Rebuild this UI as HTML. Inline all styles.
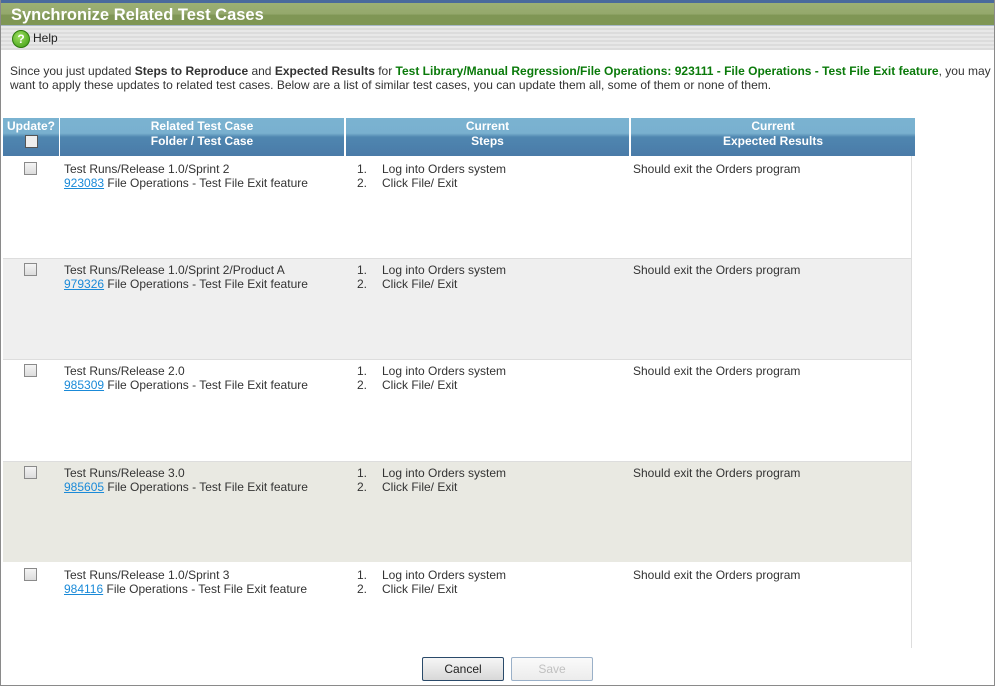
<!DOCTYPE html>
<html><head><meta charset="utf-8"><style>
*{margin:0;padding:0;box-sizing:border-box}
body{width:995px;height:686px;overflow:hidden;background:#fff;font-family:"Liberation Sans",sans-serif;font-size:12px;color:#333;position:relative}
.frame{position:absolute;left:0;top:0;width:995px;height:686px;border:1px solid #8a8a8a;border-top:none}
.topline{position:absolute;left:0;top:0;width:995px;height:3px;background:#4a6a9c}
.title{position:absolute;left:1px;top:3px;width:993px;height:23px;background:linear-gradient(#9cb074 0,#94a86c 50%,#7f9655 55%,#7f9655 100%);color:#fff;font-weight:bold;font-size:16.5px;padding:3px 0 0 10px;border-bottom:1px solid #a8b8c8}
.tool{position:absolute;left:1px;top:26px;width:993px;height:24px;background:repeating-linear-gradient(#e8e8e8 0,#e8e8e8 2px,#dcdcdc 2px,#dcdcdc 4px)}
.help{position:absolute;left:12px;top:30px;font-size:12px;color:#222}
.icon{display:inline-block;width:18px;height:18px;border-radius:50%;background:radial-gradient(circle at 40% 35%,#9fe060,#3a9a10);border:1px solid #2d7a0c;color:#fff;font-weight:bold;font-size:12px;text-align:center;line-height:16px;vertical-align:middle;margin-right:3px}
.intro{position:absolute;left:10px;top:64px;white-space:nowrap;line-height:14px;color:#333}
.g{color:#0a7a0a;font-weight:bold}
.th{position:absolute;top:118px;height:38px;background:linear-gradient(#7ab3d1 0,#79b0cf 40%,#4f86b0 50%,#4a7ba8 100%);color:#fff;font-weight:bold;text-align:center;line-height:15px;padding-top:1px}
.row{position:absolute;left:3px;width:908px;height:102px}
.cb{position:absolute;left:21px;top:6px;width:13px;height:13px;border:1px solid #8a8a8a;background:linear-gradient(#f4f4f4,#dcdcdc)}
.c1{position:absolute;left:61px;top:6px;line-height:14px}
.c2{position:absolute;left:354px;top:6px;line-height:14px}
.c2 span{display:inline-block;width:25px}
.c3{position:absolute;left:630px;top:6px}
.row.b .cb,.row.b .c1,.row.b .c2,.row.b .c3{top:4px}
a{color:#1a8ad8;text-decoration:underline}
.btn{position:absolute;top:657px;height:24px;width:82px;text-align:center;line-height:22px;font-size:12px}
</style></head><body>
<div class="topline"></div>
<div class="frame"></div>
<div class="title">Synchronize Related Test Cases</div>
<div class="tool"></div>
<div class="help"><span class="icon">?</span>Help</div>
<div class="intro">Since you just updated <b>Steps to Reproduce</b> and <b>Expected Results</b> for <span class="g">Test Library/Manual Regression/File Operations: 923111 - File Operations - Test File Exit feature</span>, you may<br>want to apply these updates to related test cases. Below are a list of similar test cases, you can update them all, some of them or none of them.</div>
<div class="th" style="left:3px;width:56px">Update?<br><span style="display:inline-block;width:13px;height:13px;border:1px solid #555;background:#eee;margin-top:1px"></span></div>
<div class="th" style="left:60px;width:284px">Related Test Case<br>Folder / Test Case</div>
<div class="th" style="left:346px;width:283px">Current<br>Steps</div>
<div class="th" style="left:631px;width:284px">Current<br>Expected Results</div>

<div class="row" style="top:156px;background:#fff"><div class="cb"></div><div class="c1">Test Runs/Release 1.0/Sprint 2<br><a>923083</a> File Operations - Test File Exit feature</div><div class="c2"><span>1.</span>Log into Orders system<br><span>2.</span>Click File/ Exit</div><div class="c3">Should exit the Orders program</div></div>
<div class="row b" style="top:258px;background:#efefef;border-top:1px solid #ddd"><div class="cb"></div><div class="c1">Test Runs/Release 1.0/Sprint 2/Product A<br><a>979326</a> File Operations - Test File Exit feature</div><div class="c2"><span>1.</span>Log into Orders system<br><span>2.</span>Click File/ Exit</div><div class="c3">Should exit the Orders program</div></div>
<div class="row b" style="top:359px;background:#fff;border-top:1px solid #ddd"><div class="cb"></div><div class="c1">Test Runs/Release 2.0<br><a>985309</a> File Operations - Test File Exit feature</div><div class="c2"><span>1.</span>Log into Orders system<br><span>2.</span>Click File/ Exit</div><div class="c3">Should exit the Orders program</div></div>
<div class="row b" style="top:461px;background:#e9e9e2;border-top:1px solid #ddd"><div class="cb"></div><div class="c1">Test Runs/Release 3.0<br><a>985605</a> File Operations - Test File Exit feature</div><div class="c2"><span>1.</span>Log into Orders system<br><span>2.</span>Click File/ Exit</div><div class="c3">Should exit the Orders program</div></div>
<div class="row" style="top:562px;height:86px;background:#fff"><div class="cb"></div><div class="c1">Test Runs/Release 1.0/Sprint 3<br><a>984116</a> File Operations - Test File Exit feature</div><div class="c2"><span>1.</span>Log into Orders system<br><span>2.</span>Click File/ Exit</div><div class="c3">Should exit the Orders program</div></div>
<div style="position:absolute;left:911px;top:156px;width:1px;height:492px;background:#ddd"></div>

<div class="btn" style="left:422px;border:1px solid #2a4a6a;border-radius:2px;background:linear-gradient(#f6f6f6,#d8d8d8);color:#222">Cancel</div>
<div class="btn" style="left:511px;border:1px solid #9ab0c8;border-radius:2px;background:linear-gradient(#fafafa,#ececec);color:#c0c0c0">Save</div>
</body></html>
